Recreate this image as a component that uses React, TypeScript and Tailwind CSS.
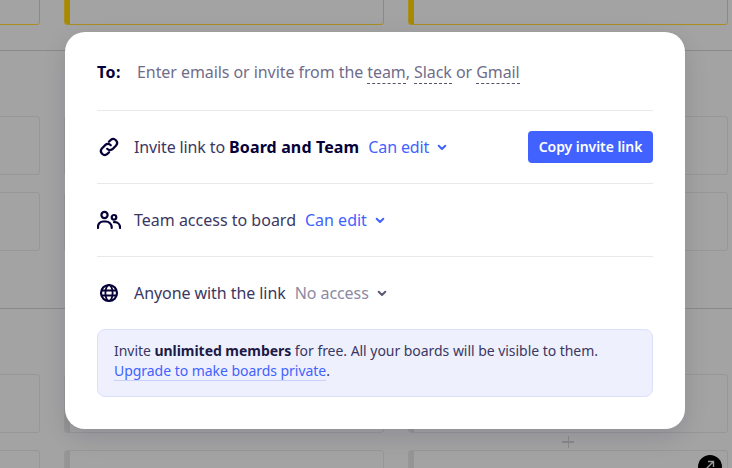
const Chevron = ({ color }: { color: string }) => (
  <svg width="10" height="7" viewBox="0 0 10 7" fill="none" className="shrink-0">
    <path d="M1.7 1.7 5 5l3.3-3.3" stroke={color} strokeWidth="2" strokeLinecap="round" strokeLinejoin="round" />
  </svg>
);

const Card = ({ accent = "bg-[#959595]", border = "border-[#979797]", h = "h-[59px]" }: { accent?: string; border?: string; h?: string }) => (
  <div className={`flex w-[320px] shrink-0 overflow-hidden rounded-[3px] border ${border} ${h}`}>
    <div className={`w-[5px] shrink-0 ${accent}`} />
  </div>
);

const CardRow = ({ mt, h }: { mt: string; h?: string }) => (
  <div className={`ml-[-280px] flex gap-6 ${mt}`}>
    <Card h={h} accent="bg-transparent" />
    <Card h={h} />
    <Card h={h} />
  </div>
);

const LinkIcon = () => (
  <svg width="24" height="24" viewBox="0 0 24 24" fill="none" stroke="#050038" strokeWidth="2.2" strokeLinecap="round" className="shrink-0">
    <path d="M10.2 13.8a3.9 3.9 0 0 0 5.6.1l3.3-3.3a3.9 3.9 0 0 0-5.5-5.5l-1.7 1.7" />
    <path d="M13.8 10.2a3.9 3.9 0 0 0-5.6-.1l-3.3 3.3a3.9 3.9 0 0 0 5.5 5.5l1.7-1.7" />
  </svg>
);

const TeamIcon = () => (
  <svg width="24" height="24" viewBox="0 0 24 24" fill="none" stroke="#050038" strokeWidth="2.2" strokeLinecap="round" className="shrink-0">
    <circle cx="7.5" cy="7" r="3.1" />
    <circle cx="17" cy="9.3" r="2.3" />
    <path d="M1 20v-1.4A5.1 5.1 0 0 1 6.1 13.5h2.8a5.8 5.8 0 0 1 5.8 5.8v.7" />
    <path d="M17 14.2h1a5 5 0 0 1 5 5v.8" />
  </svg>
);

const GlobeIcon = () => (
  <svg width="24" height="24" viewBox="0 0 24 24" fill="none" stroke="#050038" strokeWidth="2.2" className="shrink-0">
    <circle cx="12" cy="12" r="8" />
    <ellipse cx="12" cy="12" rx="3.6" ry="8" strokeWidth="1.8" />
    <path d="M4.5 9.5h15M4.5 14.5h15" strokeWidth="1.8" />
  </svg>
);

export default function App() {
  return (
    <div className="relative h-[468px] w-[732px] overflow-hidden bg-[#a3a3a3] font-['Noto_Sans',sans-serif]">
      <div className="mt-[-35px] border-b border-[#8a8a8a] pb-[25px]">
        <div className="ml-[-280px] flex gap-6">
          <div className="h-[60px] w-[320px] shrink-0 rounded-[3px] border border-[#a98f22]" />
          <div className="flex h-[60px] w-[320px] shrink-0 overflow-hidden rounded-[3px] border border-[#a98f22]">
            <div className="w-[5px] bg-[#a88a00]" />
          </div>
          <div className="flex h-[60px] w-[320px] shrink-0 overflow-hidden rounded-[3px] border border-[#a98f22]">
            <div className="w-[5px] bg-[#a88a00]" />
          </div>
        </div>
      </div>
      <div className="border-b border-[#8a8a8a] pb-[57px]">
        <CardRow mt="mt-[65px]" />
        <CardRow mt="mt-[17px]" />
      </div>
      <CardRow mt="mt-[65px]" />
      <CardRow mt="mt-[17px]" h="h-[40px]" />

      <div className="absolute left-[562px] top-[441px] h-[1.5px] w-[12px] bg-[#8a8a8a]" />
      <div className="absolute left-[567.5px] top-[435.5px] h-[12px] w-[1.5px] bg-[#8a8a8a]" />
      <div className="absolute left-[698px] top-[455px] flex h-6 w-6 items-start justify-center rounded-full bg-black pt-[5px]">
        <svg width="10" height="10" viewBox="0 0 10 10" fill="none" stroke="#9a9a9a" strokeWidth="1.4">
          <path d="M3 1.5h5.5V7M8.5 1.5 1.5 8.5" />
        </svg>
      </div>

      <div className="absolute left-[65px] top-[32px] flex h-[397px] w-[620px] flex-col rounded-[20px] bg-white px-8 text-[16px] leading-6 text-[#050038] shadow-[0_8px_24px_rgba(5,0,56,0.12)]">
        <div className="flex h-[79px] shrink-0 items-center border-b border-[#e9e9ec] pt-[2px] tracking-[-0.07px]">
          <span className="w-10 font-bold tracking-[0.5px]">To:</span>
          <span className="text-[#706d8a]">
            Enter emails or invite from the{" "}
            <span className="border-b border-dashed border-[#55536f]">team</span>,{" "}
            <span className="border-b border-dashed border-[#55536f]">Slack</span> or{" "}
            <span className="border-b border-dashed border-[#55536f]">Gmail</span>
          </span>
        </div>

        <div className="flex h-[73px] shrink-0 items-center border-b border-[#e9e9ec] tracking-[-0.13px]">
          <LinkIcon />
          <span className="ml-[13px] text-[#3b3762]">
            Invite link to <b className="font-bold tracking-[0.13px] text-[#050038]">Board and Team</b>
          </span>
          <span className="ml-[9px] text-[#4262ff]">Can edit</span>
          <span className="ml-[8px] flex"><Chevron color="#4262ff" /></span>
          <button className="ml-auto flex h-8 w-[125px] items-center justify-center rounded-[4px] bg-[#4262ff] text-[14px] font-semibold tracking-[-0.05px] text-white">
            Copy invite link
          </button>
        </div>

        <div className="flex h-[73px] shrink-0 items-center border-b border-[#e9e9ec]">
          <TeamIcon />
          <span className="ml-[13px] text-[#3b3762]">Team access to board</span>
          <span className="ml-[9px] text-[#4262ff]">Can edit</span>
          <span className="ml-[8px] flex"><Chevron color="#4262ff" /></span>
        </div>

        <div className="flex h-[72px] shrink-0 items-center tracking-[-0.07px]">
          <GlobeIcon />
          <span className="ml-[13px] text-[#3b3762]">Anyone with the link</span>
          <span className="ml-[9px] text-[#8c8aa3]">No access</span>
          <span className="ml-[8px] flex"><Chevron color="#5c5a75" /></span>
        </div>

        <div className="h-[68px] shrink-0 rounded-[8px] border border-[#dbe0fd] bg-[#eef0fe] px-4 pt-[11px] text-[14px] leading-5 tracking-[-0.04px] text-[#3b3762]">
          <div>
            Invite <b className="font-bold text-[#1d1a45]">unlimited members</b> for free. All your boards will be visible to them.
          </div>
          <div>
            <span className="border-b border-[#c9d2fd] text-[#4262ff]">Upgrade to make boards private</span>.
          </div>
        </div>
      </div>
    </div>
  );
}
